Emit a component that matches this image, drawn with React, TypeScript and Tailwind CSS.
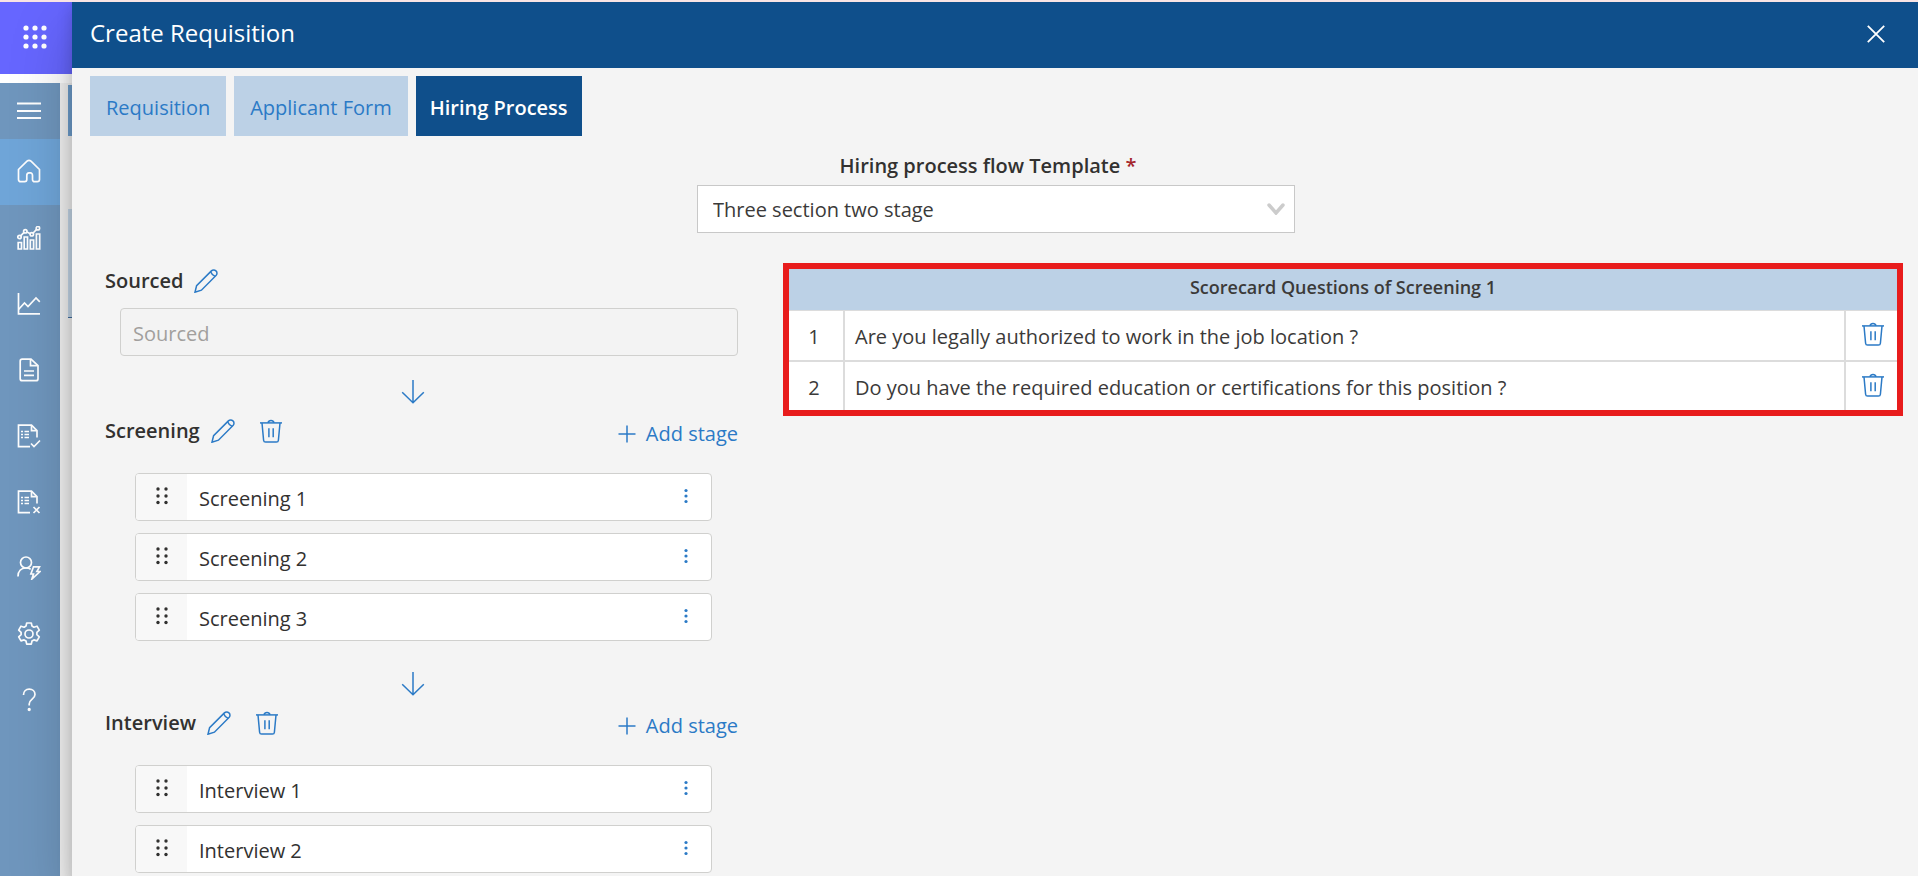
import React from 'react';

const stroke = {
  fill: 'none',
  stroke: 'currentColor',
  strokeWidth: 1.5,
} as const;

const PencilIcon = () => (
  <svg viewBox="0 0 24 24" className="size-6" {...stroke} aria-hidden="true">
    <path d="M1 23.2l1.6-6.6L17.4 1.9a3.2 3.2 0 0 1 4.6 0 3.2 3.2 0 0 1 0 4.6L7.4 21.2z" />
    <path d="M16.6 2.8c1 2.600 2.200 3.600 4.600 4.600" />
  </svg>
);

const TrashIcon = () => (
  <svg viewBox="0 0 24 24" className="size-6" {...stroke} aria-hidden="true">
    <path d="M1 3.900h22" />
    <path d="M9 3.800a3.100 3.100 0 0 1 6 0" />
    <path d="M3 4l1.600 17.200c.1 1.200.8 1.900 2 1.900h10.800c1.200 0 1.900-.7 2-1.900L21 4" />
    <path d="M9.900 9.300v9M14.200 9.300v9" />
  </svg>
);

const ArrowDownIcon = () => (
  <svg viewBox="0 0 24 24" className="size-6" {...stroke} aria-hidden="true">
    <path d="M12 0v23M1.200 12.200L12 22.800l10.800-10.600" />
  </svg>
);

const PlusIcon = () => (
  <svg viewBox="0 0 18 18" className="size-[18px]" {...stroke} aria-hidden="true">
    <path d="M9 .5v17M.5 9h17" />
  </svg>
);

const CloseIcon = () => (
  <svg viewBox="0 0 18 18" className="size-[18px]" {...stroke} strokeWidth={1.8} aria-hidden="true">
    <path d="M.8.8l16.400 16.400M17.200.8L.8 17.200" />
  </svg>
);

const GripIcon = () => (
  <svg viewBox="0 0 12 18" className="h-[18px] w-3" fill="currentColor" aria-hidden="true">
    {[2, 9, 15.5].map((y) => (
      <React.Fragment key={y}>
        <circle cx="2" cy={y} r="1.700" />
        <circle cx="10" cy={y} r="1.700" />
      </React.Fragment>
    ))}
  </svg>
);

const KebabIcon = () => (
  <svg viewBox="0 0 4 16" className="h-4 w-1" fill="currentColor" aria-hidden="true">
    <circle cx="2" cy="2.500" r="1.600" />
    <circle cx="2" cy="8" r="1.600" />
    <circle cx="2" cy="13.500" r="1.600" />
  </svg>
);

const WaffleIcon = () => (
  <svg viewBox="0 0 24 24" className="size-6" fill="currentColor" aria-hidden="true">
    {[3, 12, 21].map((y) =>
      [3, 12, 21].map((x) => <circle key={`${x}-${y}`} cx={x} cy={y} r="2.600" />),
    )}
  </svg>
);

const NavSvg = ({ children }: { children: React.ReactNode }) => (
  <svg viewBox="0 0 24 24" className="size-6" {...stroke} strokeWidth={1.7} aria-hidden="true">
    {children}
  </svg>
);

const sheet = (
  <>
    <path d="M13 22.700H1.500V1.200h13l5.500 5.500V13.500" />
    <path d="M14.500 1.200v5.500H20" />
    <path d="M4 7.500h2M7.500 7.500H12M4 10.500h2M7.500 10.500H12M4 13.500h2M7.500 13.500H12" />
  </>
);

const navItems: { label: string; icon: React.ReactNode }[] = [
  {
    label: 'Home',
    icon: (
      <NavSvg>
        <path d="M1.500 10.500L10 2.200c1.300-1.200 2.700-1.200 4 0l8.500 8.300v10c0 1.300-.9 2.200-2.200 2.200h-2.600c-1.300 0-2.200-.9-2.200-2.200v-4c0-1.800-1-2.700-2-2.700h-1.500c-1.200 0-2.200.9-2.200 2.700v4c0 1.300-.9 2.200-2.200 2.200H3.700c-1.300 0-2.200-.9-2.200-2.200z" />
      </NavSvg>
    ),
  },
  {
    label: 'Dashboard',
    icon: (
      <NavSvg>
        <path d="M1.200 16.500h3.300v6.500H1.200zM7.200 11h3.300v12H7.200zM13.300 14h3.300v9h-3.300zM19.400 8h3.300v15h-3.300z" />
        <path d="M3.600 9.800l3.200-3.200M10 6l3.300 1.800M16.200 7l3.600-3.800" />
        <circle cx="2.500" cy="11" r="1.700" />
        <circle cx="8.300" cy="5.300" r="1.700" />
        <circle cx="14.800" cy="8.300" r="1.700" />
        <circle cx="20.900" cy="2.200" r="1.700" />
      </NavSvg>
    ),
  },
  {
    label: 'Analytics',
    icon: (
      <NavSvg>
        <path d="M1.500 1v20.800H23" />
        <path d="M1.500 17.500l6-6.500 3.500 3.500 8-8.500 3.800 3.800" />
      </NavSvg>
    ),
  },
  {
    label: 'Documents',
    icon: (
      <NavSvg>
        <path d="M5.200 1.200H14l7 6.500v13c0 1.200-.8 2-2 2H5.200c-1.200 0-2-.8-2-2V3.200c0-1.200.8-2 2-2z" />
        <path d="M13.500 1.200v6.500H21M7 13h10M7 17.300h10" />
      </NavSvg>
    ),
  },
  {
    label: 'Approved',
    icon: (
      <NavSvg>
        {sheet}
        <path d="M14 19.500l3 3L23 16.500" />
      </NavSvg>
    ),
  },
  {
    label: 'Rejected',
    icon: (
      <NavSvg>
        {sheet}
        <path d="M16.500 17l6 6M22.500 17l-6 6" />
      </NavSvg>
    ),
  },
  {
    label: 'Candidates',
    icon: (
      <NavSvg>
        <circle cx="9" cy="6.500" r="5.500" />
        <path d="M1 20.500c0-5.500 3.500-8.500 8-8.500 2 0 3.500.5 4.700 1.300" />
        <path d="M16.500 10.800h6l-2.600 4.700h3l-8 7.500 1.600-5h-2.600z" />
      </NavSvg>
    ),
  },
  {
    label: 'Settings',
    icon: (
      <NavSvg>
        <circle cx="12" cy="12" r="4" />
        <path
          strokeLinejoin="round"
          d="M9.700 1h4.600l.7 3.100 1.900 1.100 3.100-1 2.300 4-2.400 2.200v2.300l2.400 2.200-2.300 4-3.100-1-1.900 1.100-.7 3.100H9.700L9 19l-1.900-1.100-3.100 1-2.300-4 2.400-2.200v-2.300L1.700 8.200l2.300-4 3.100 1L9 4.100z"
        />
      </NavSvg>
    ),
  },
  {
    label: 'Help',
    icon: (
      <NavSvg>
        <path d="M6.500 7c0-3.500 2.300-5.800 5.700-5.800S18 3.300 18 6.500c0 4.700-5.800 4.700-5.800 9.500v1.500" />
        <circle cx="12.200" cy="21.500" r=".8" fill="currentColor" />
      </NavSvg>
    ),
  },
];

const tabs = [
  { label: 'Requisition', active: false },
  { label: 'Applicant Form', active: false },
  { label: 'Hiring Process', active: true },
];

const sections = [
  { name: 'Screening', stages: ['Screening 1', 'Screening 2', 'Screening 3'] },
  { name: 'Interview', stages: ['Interview 1', 'Interview 2'] },
];

const questions = [
  'Are you legally authorized to work in the job location ?',
  'Do you have the required education or certifications for this position ?',
];

function SideNav() {
  return (
    <div className="flex w-[72px] shrink-0 flex-col bg-white">
      <button
        type="button"
        aria-label="App launcher"
        className="flex h-[72px] shrink-0 items-center justify-center bg-[#6666ff] pr-0.5 pb-0.5 text-white"
      >
        <WaffleIcon />
      </button>
      <div className="mt-[9px] flex flex-1 justify-between bg-[#f3f3f3]">
        <nav aria-label="Main" className="w-[60px] bg-[#6f96bd] text-white">
          <button type="button" aria-label="Toggle menu" className="flex h-14 w-full items-center justify-center pr-0.5">
            <svg viewBox="0 0 24 24" className="size-6" stroke="currentColor" strokeWidth="2" aria-hidden="true">
              <path d="M0 4.500h24M0 12h24M0 19h24" />
            </svg>
          </button>
          {navItems.map((item) => (
            <a
              key={item.label}
              href="#"
              aria-label={item.label}
              className={
                item.label === 'Home'
                  ? 'flex h-[66px] items-center justify-center bg-[#6fa5d8] pr-0.5 pb-0.5'
                  : 'flex h-[66px] items-center justify-center pr-0.5'
              }
            >
              {item.icon}
            </a>
          ))}
        </nav>
        <div className="w-1 pt-0.5">
          <div className="h-[51px] bg-[#6f9fce]" />
          <div className="mt-[73px] h-[109px] border-b border-[#3f6ea0] bg-[#c5d7e9]" />
        </div>
      </div>
    </div>
  );
}

function SectionHeading({ name, removable }: { name: string; removable: boolean }) {
  return (
    <div className="flex items-center text-[#2b7ac6]">
      <h2 className="font-semibold text-[#323130]">{name}</h2>
      <button type="button" aria-label={`Rename ${name}`} className="ml-[11px]">
        <PencilIcon />
      </button>
      {removable && (
        <button type="button" aria-label={`Delete ${name}`} className="ml-6">
          <TrashIcon />
        </button>
      )}
    </div>
  );
}

function Stage({ name }: { name: string }) {
  return (
    <li className="flex h-12 items-stretch overflow-hidden rounded-sm border border-[#d0d0ce] bg-white">
      <button
        type="button"
        aria-label={`Move ${name}`}
        className="flex w-[51px] shrink-0 items-center justify-center bg-[#f8f8f8] pb-0.5 text-[#323130]"
      >
        <GripIcon />
      </button>
      <input
        type="text"
        aria-label="Stage name"
        defaultValue={name}
        className="min-w-0 flex-1 bg-transparent px-3 pt-1 text-[#323130] outline-none"
      />
      <button
        type="button"
        aria-label={`${name} options`}
        className="flex w-[50px] shrink-0 items-center justify-center pb-0.5 text-[#2b7ac6]"
      >
        <KebabIcon />
      </button>
    </li>
  );
}

function Section({ name, stages }: { name: string; stages: string[] }) {
  return (
    <section className="pb-[7px]">
      <div className="flex justify-center pt-6 pr-[18px] pb-2.5 text-[#2b7ac6]">
        <ArrowDownIcon />
      </div>
      <div className="flex items-center justify-between">
        <SectionHeading name={name} removable />
        <button type="button" className="flex items-center gap-2.5 pt-1.5 text-[#2b7ac6]">
          <PlusIcon />
          Add stage
        </button>
      </div>
      <ul className="mt-[25px] mr-[26px] ml-[30px] flex flex-col gap-3">
        {stages.map((stage) => (
          <Stage key={stage} name={stage} />
        ))}
      </ul>
    </section>
  );
}

function Scorecard() {
  return (
    <div className="min-w-0 self-start border-6 border-[#e81c1c]">
      <table className="w-full border-collapse bg-white text-[#3b3a39]">
        <thead>
          <tr>
            <th
              colSpan={3}
              scope="colgroup"
              className="h-[41px] border-b border-[#dcdcdc] bg-[#bcd1e6] pb-1 text-lg leading-6 font-semibold"
            >
              Scorecard Questions of Screening 1
            </th>
          </tr>
        </thead>
        <tbody>
          {questions.map((question, i) => (
            <tr key={question} className="h-[51px] border-b-2 border-[#dcdcdc] last:h-[49px] last:border-b-0">
              <td className="w-[55px] border-r-2 border-[#dcdcdc] pt-1 pr-1 text-center">{i + 1}</td>
              <td className="px-2.5 pt-1">{question}</td>
              <td className="w-[52px] border-l-2 border-[#dcdcdc]">
                <button
                  type="button"
                  aria-label={`Delete question ${i + 1}`}
                  className="flex w-full justify-center pb-0.5 pl-0.5 text-[#2b7ac6]"
                >
                  <TrashIcon />
                </button>
              </td>
            </tr>
          ))}
        </tbody>
      </table>
    </div>
  );
}

export default function App() {
  return (
    <div className="flex min-h-screen flex-col overflow-hidden border-t-2 border-[#f9e4e4] font-['Open_Sans',sans-serif] text-xl leading-7 text-[#323130]">
      <div className="flex flex-1">
        <SideNav />
        <div
          role="dialog"
          aria-labelledby="panel-title"
          className="relative z-10 min-w-0 flex-1 bg-[#f4f4f4] shadow-[0_26px_58px_rgba(0,0,0,0.22),0_5px_14px_rgba(0,0,0,0.18)]"
        >
          <header className="flex h-[66px] items-center justify-between bg-[#0f4f8b] pr-8 pl-[18px] text-white">
            <h1 id="panel-title" className="pb-1 text-2xl">
              Create Requisition
            </h1>
            <button type="button" aria-label="Close" className="px-px pb-0.5">
              <CloseIcon />
            </button>
          </header>

          <div role="tablist" className="flex gap-2 px-[18px] pt-2">
            {tabs.map((tab) => (
              <button
                key={tab.label}
                type="button"
                role="tab"
                aria-selected={tab.active}
                className={
                  tab.active
                    ? 'h-[60px] bg-[#0f4f8b] px-3.5 pt-1 font-semibold text-white'
                    : 'h-[60px] bg-[#bcd1e6] px-4 pt-1 text-[#2b7ac6]'
                }
              >
                {tab.label}
              </button>
            ))}
          </div>

          <div className="mt-4 flex flex-col items-center pl-0.5">
            <label htmlFor="flow-template" className="pr-4 font-semibold">
              Hiring process flow Template <span className="text-[#a4262c]">*</span>
            </label>
            <div className="relative mt-[5px] w-[598px] max-w-full">
              <select
                id="flow-template"
                defaultValue="three-two"
                className="h-12 w-full appearance-none border border-[#c8c8c8] bg-white px-[15px] pt-0.5 text-[#3b3a39]"
              >
                <option value="three-two">Three section two stage</option>
              </select>
              <svg
                viewBox="0 0 18 12"
                className="pointer-events-none absolute top-[18px] right-2.5 h-3 w-[18px]"
                fill="none"
                stroke="#cccccc"
                strokeWidth="3.500"
                strokeLinecap="round"
                aria-hidden="true"
              >
                <path d="M2 2l7 8 7-8" />
              </svg>
            </div>
          </div>

          <div className="grid grid-cols-[633fr_1120fr] gap-[45px] pt-[30px] pr-[15px] pl-[33px]">
            <div className="min-w-0 pt-1">
              <SectionHeading name="Sourced" removable={false} />
              <input
                type="text"
                aria-label="Sourced section name"
                defaultValue="Sourced"
                disabled
                className="mt-[13px] ml-[15px] block h-12 w-[calc(100%-15px)] rounded-sm border border-[#d0d0ce] bg-[#f3f3f3] px-3 pt-0.5 text-[#a19f9d]"
              />
              {sections.map((section) => (
                <Section key={section.name} {...section} />
              ))}
            </div>
            <Scorecard />
          </div>
        </div>
      </div>
    </div>
  );
}
